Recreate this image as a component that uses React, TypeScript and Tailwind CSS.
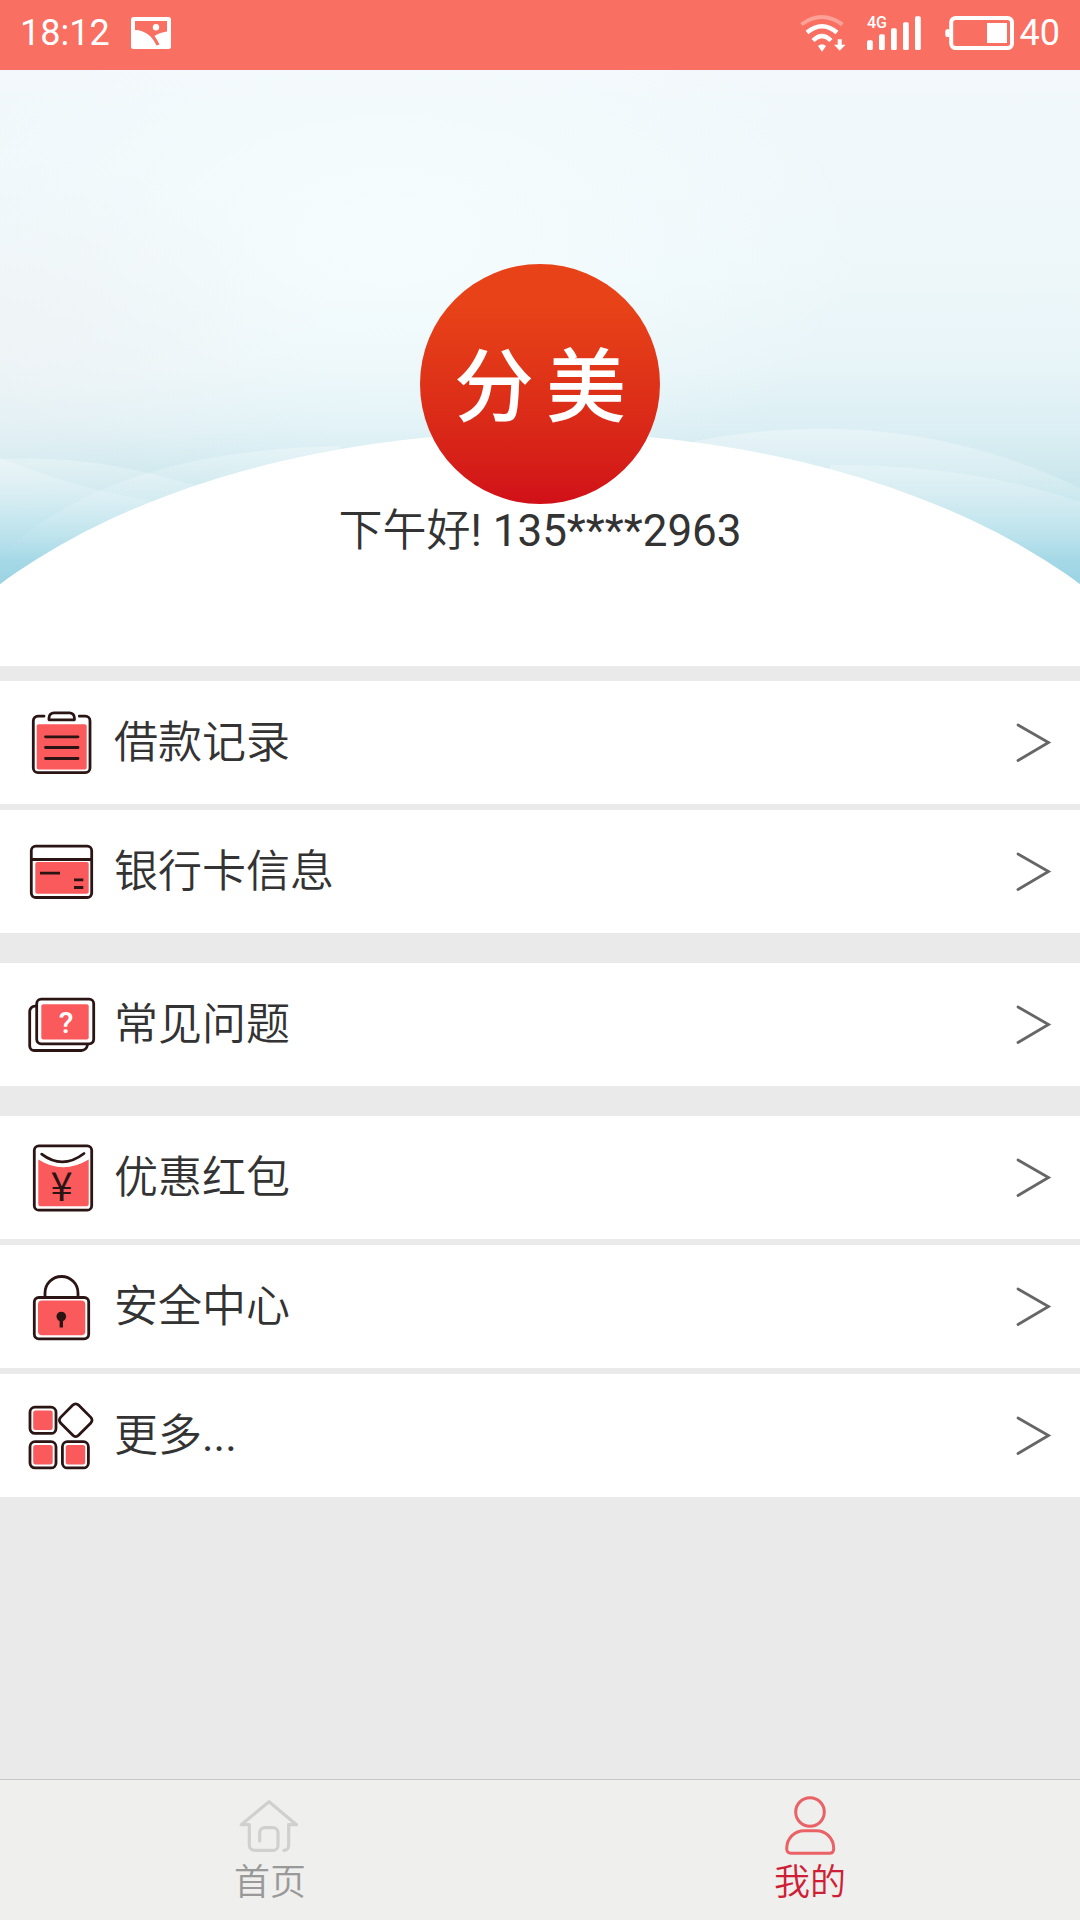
import type { ReactNode } from 'react';

const DARK = '#2b1414';
const RED = '#fb5a5c';

function ClipboardIcon() {
  return (
    <>
      <rect x="12.7" y="17.2" width="50" height="45.3" rx="2" fill={RED} stroke="none" />
      <path d="M20 9.2H14a4.7 4.7 0 0 0-4.7 4.7V61a4.7 4.7 0 0 0 4.7 4.7H61.3A4.7 4.7 0 0 0 66 61V13.9a4.7 4.7 0 0 0-4.7-4.7H55.3" />
      <path d="M25 12.8V11a5 5 0 0 1 5-5.2H45.4a5 5 0 0 1 5 5.2V12.8Z" />
      <path d="M21.5 29.8H54M21.5 40.5H54M21.5 51.5H54" />
    </>
  );
}

function CardIcon() {
  return (
    <>
      <rect x="11.3" y="26" width="53.4" height="31.8" rx="2" fill={RED} stroke="none" />
      <rect x="7.3" y="10.2" width="60.4" height="51.3" rx="4.5" />
      <path d="M7.3 23.5H67.7M16 37.2H36M50 43.8H59.3M50 51.5H59.3" strokeLinecap="butt" />
    </>
  );
}

function FaqIcon() {
  return (
    <>
      <path d="M12 17.2H11a5.3 5.3 0 0 0-5.3 5.3V57a4.5 4.5 0 0 0 4.5 4.5H57.5a6 6 0 0 0 5.8-5" />
      <rect x="17.3" y="15.2" width="47.4" height="35.3" rx="2" fill={RED} stroke="none" />
      <rect x="12.7" y="10.2" width="57" height="44.6" rx="4.5" />
      <text x="42" y="43.5" textAnchor="middle" fontFamily="Roboto, sans-serif" fontSize="30" fontWeight="500" fill="#fff" stroke="none">
        ?
      </text>
    </>
  );
}

function RedPacketIcon() {
  return (
    <>
      <path d="M14.3 17.5Q39 33 64.700 17.500V62.200a2 2 0 0 1-2 2H16.300a2 2 0 0 1-2-2Z" fill={RED} stroke="none" />
      <rect x="10.3" y="3.8" width="57.4" height="64.4" rx="4.5" />
      <path d="M17.7 12.2Q38.5 28 60 11.5" />
      <text x="37.5" y="59" textAnchor="middle" fontFamily="'Noto Sans CJK SC', sans-serif" fontSize="40" fontWeight="400" fill={DARK} stroke="none">
        ¥
      </text>
    </>
  );
}

function LockIcon() {
  return (
    <>
      <rect x="14" y="29.5" width="47.3" height="34.7" rx="4" fill={RED} stroke="none" />
      <rect x="10.3" y="26.5" width="54.4" height="41.3" rx="4.5" />
      <path d="M21 26V22a16.5 16.5 0 0 1 33 0V26" />
      <circle cx="37.3" cy="45.5" r="4.8" fill={DARK} stroke="none" />
      <path d="M37.3 47V56.5" strokeWidth="3.4" strokeLinecap="butt" />
    </>
  );
}

function MoreIcon() {
  return (
    <>
      <g fill={RED} stroke="none">
        <rect x="9.2" y="10.6" width="19.5" height="19.5" rx="2.5" />
        <rect x="9.2" y="45" width="19.5" height="19.5" rx="2.5" />
        <rect x="41.7" y="45" width="19.5" height="19.5" rx="2.5" />
      </g>
      <rect x="6" y="7.2" width="26" height="26.2" rx="5" />
      <rect x="6" y="41.7" width="26" height="26.2" rx="5" />
      <rect x="38.4" y="41.7" width="26" height="26.2" rx="5" />
      <rect x="39" y="7.5" width="25.4" height="25.4" rx="4" transform="rotate(45 51.7 20.2)" />
    </>
  );
}

type MenuItem = { id: string; label: ReactNode; icon: ReactNode };

const menuGroups: MenuItem[][] = [
  [
    { id: 'records', label: '借款记录', icon: <ClipboardIcon /> },
    { id: 'cards', label: '银行卡信息', icon: <CardIcon /> },
  ],
  [{ id: 'faq', label: '常见问题', icon: <FaqIcon /> }],
  [
    { id: 'coupons', label: '优惠红包', icon: <RedPacketIcon /> },
    { id: 'security', label: '安全中心', icon: <LockIcon /> },
    { id: 'more', label: <>更多<span className="font-normal">...</span></>, icon: <MoreIcon /> },
  ],
];

function MenuRow({ label, icon }: Omit<MenuItem, 'id'>) {
  return (
    <a href="#" className="flex h-[123px] items-center bg-white pr-7 pl-6">
      <svg viewBox="0 0 72 72" className="h-18 w-18 shrink-0" fill="none" stroke={DARK} strokeWidth="2.8" strokeLinecap="round" strokeLinejoin="round">
        {icon}
      </svg>
      <span className="ml-[18px] flex-1 text-[44px] leading-[60px] font-[350] text-[#333]">{label}</span>
      <svg viewBox="0 0 36 40" className="h-10 w-9" fill="none" stroke="#666" strokeWidth="2.8" strokeLinecap="round" strokeLinejoin="miter">
        <path d="M2 2L32.5 19.5L2 37.5" />
      </svg>
    </a>
  );
}

function StatusBar() {
  return (
    <header className="flex h-[70px] items-center bg-[#f96f62] px-5 pb-1 text-4xl leading-none text-white">
      <span>18:12</span>
      <svg viewBox="0 0 40 32" className="ml-[21px] h-8 w-10" fill="#fff">
        <rect width="40" height="32" rx="2.5" />
        <path d="M4 4H36V14.5Q28 15.5 23.5 19Q26.500 23 28.500 27.500L25.500 28.500C22 20 14 13 4 13Z" fill="#f96f62" />
        <circle cx="25" cy="10.3" r="3.2" />
      </svg>
      <div className="ml-auto flex items-center">
        <svg viewBox="0 0 48 40" className="h-10 w-12" fill="none" stroke="#fff" strokeWidth="4.4">
          <path d="M2.5 11.5Q22.5-3.5 43.5 11.5" strokeWidth="4" opacity=".35" />
          <path d="M8 19.5Q23 7 38 19.5" />
          <path d="M14 27.5Q23 18.5 32 27.5" />
          <path d="M19 33Q23 29.5 27 33L23 38.7Z" fill="#fff" stroke="none" />
          <path d="M38.7 26.3H42.7V31.7H46.5L40.7 37.7L35 31.7H38.7Z" fill="#fff" stroke="none" />
        </svg>
        <svg viewBox="0 -6 56 48" className="ml-[19px] h-12 w-14" fill="#fff">
          <text x="1" y="12.5" fontFamily="Roboto, sans-serif" fontSize="16" fontWeight="500">
            4G
          </text>
          <rect x="1" y="25.3" width="5.8" height="9.7" rx="1.5" />
          <rect x="13" y="19.3" width="5.8" height="15.7" rx="1.5" />
          <rect x="25" y="13.3" width="5.8" height="21.7" rx="1.5" />
          <rect x="37" y="7.3" width="5.8" height="27.7" rx="1.5" />
          <rect x="49" y="1.3" width="5.8" height="33.7" rx="1.5" />
        </svg>
        <svg viewBox="0 0 70 36" className="ml-[23px] h-9 w-[70px]" fill="#fff">
          <path d="M4.5 14.3H2.3A2 2 0 0 0 .3 16.3V20a2 2 0 0 0 2 2H4.5Z" />
          <rect x="6.2" y="2.9" width="60.8" height="30.2" rx="4.5" fill="none" stroke="#fff" strokeWidth="4" />
          <rect x="42" y="8" width="20" height="20" />
        </svg>
        <span className="ml-[5px]">40</span>
      </div>
    </header>
  );
}

function HeroBackground() {
  return (
    <svg viewBox="0 0 1080 596" preserveAspectRatio="none" className="absolute inset-0 h-full w-full" aria-hidden="true">
      <defs>
        <linearGradient id="sky" x1="0" y1="0" x2="0" y2="1">
          <stop offset="0" stopColor="#f2f8fb" />
          <stop offset=".35" stopColor="#edf7fa" />
          <stop offset=".5" stopColor="#e7f4f8" />
          <stop offset=".6" stopColor="#dceff4" />
          <stop offset=".68" stopColor="#cde8ee" />
          <stop offset=".77" stopColor="#b5e0eb" />
          <stop offset=".87" stopColor="#98d2e3" />
        </linearGradient>
        <radialGradient id="glow" cx=".36" cy=".28" r=".45">
          <stop offset="0" stopColor="#f6fdfe" stopOpacity=".9" />
          <stop offset="1" stopColor="#f6fdfe" stopOpacity="0" />
        </radialGradient>
        <radialGradient id="haze" cx="0" cy=".45" r=".3">
          <stop offset="0" stopColor="#f1f3f5" stopOpacity=".7" />
          <stop offset="1" stopColor="#f1f3f5" stopOpacity="0" />
        </radialGradient>
        <linearGradient id="wave" gradientUnits="userSpaceOnUse" x1="0" y1="355" x2="0" y2="490">
          <stop offset="0" stopColor="#fff" stopOpacity=".34" />
          <stop offset="1" stopColor="#fff" stopOpacity="0" />
        </linearGradient>
      </defs>
      <rect width="1080" height="596" fill="url(#sky)" />
      <rect width="1080" height="596" fill="url(#glow)" />
      <rect width="1080" height="596" fill="url(#haze)" />
      <g fill="url(#wave)">
        <path d="M0 389C70 386 120 394 190 414L300 450L0 520Z" />
        <path d="M0 388Q50 408 105 422L200 440L0 520Z" />
        <path d="M0 486Q110 380 340 376L340 500L0 520Z" />
        <path d="M695 371C830 345 960 360 1080 418V520H695Z" />
        <path d="M830 395Q970 394 1080 432V520H830Z" />
      </g>
      <ellipse cx="540" cy="750" rx="680" ry="388" fill="#fff" />
      <rect y="516" width="1080" height="80" fill="#fff" />
    </svg>
  );
}

function Hero() {
  return (
    <section className="relative bg-white">
      <HeroBackground />
      <div className="relative flex flex-col items-center pt-[194px] pb-[108px]">
        <div className="flex h-60 w-60 items-center justify-center gap-3 rounded-full bg-linear-to-b from-[#e84318] from-15% to-[#d10f18] pt-2 text-[80px] leading-none font-medium text-white">
          <span>分</span>
          <span>美</span>
        </div>
        <p className="text-[44px] leading-[54px] text-[#333]">
          <span className="font-[350]">下午好</span>! 135****2963
        </p>
      </div>
    </section>
  );
}

function TabBar() {
  return (
    <nav className="mt-auto flex border-t border-[#c8c8c7] bg-[#efefed] pt-3.5 pb-3 text-4xl leading-[50px] font-[350]">
      <a href="#" className="flex flex-1 flex-col items-center text-[#999]">
        <svg viewBox="0 0 64 64" className="h-16 w-16" fill="none" stroke="#d0d0ce" strokeWidth="3.2" strokeLinecap="round" strokeLinejoin="round">
          <path d="M50.7 30.7H58.5L31 7.7L3.3 30.7H11.3V51a5.5 5.5 0 0 0 5.5 5.4H35a5 5 0 0 0 5-5V38.700a5 5 0 0 0-5-5H26.700a5 5 0 0 0-5 5V47" />
          <path d="M50.7 30.7V51.5a5 5 0 0 1-4.7 4.9" />
        </svg>
        <span>首页</span>
      </a>
      <a href="#" aria-current="page" className="flex flex-1 flex-col items-center text-[#cf1f37]">
        <svg viewBox="0 0 64 64" className="h-16 w-16" fill="none" stroke="#ea6266" strokeWidth="3" strokeLinejoin="round">
          <circle cx="32" cy="18" r="14.3" />
          <path d="M8.7 54.5C8.7 44 17 36.7 26 36.7H38.5C47.5 36.7 55.7 44 55.7 54.5Q55.7 59.3 51.5 59.3H13Q8.7 59.3 8.7 54.5Z" />
        </svg>
        <span>我的</span>
      </a>
    </nav>
  );
}

export default function App() {
  return (
    <div className="flex min-h-screen flex-col bg-[#eaeaea] font-[Roboto,'Noto_Sans_CJK_SC',sans-serif]">
      <StatusBar />
      <Hero />
      <main className="mt-[15px] flex flex-col gap-[30px]">
        {menuGroups.map((group) => (
          <div key={group[0].id} className="flex flex-col gap-1.5">
            {group.map(({ id, label, icon }) => (
              <MenuRow key={id} label={label} icon={icon} />
            ))}
          </div>
        ))}
      </main>
      <TabBar />
    </div>
  );
}
